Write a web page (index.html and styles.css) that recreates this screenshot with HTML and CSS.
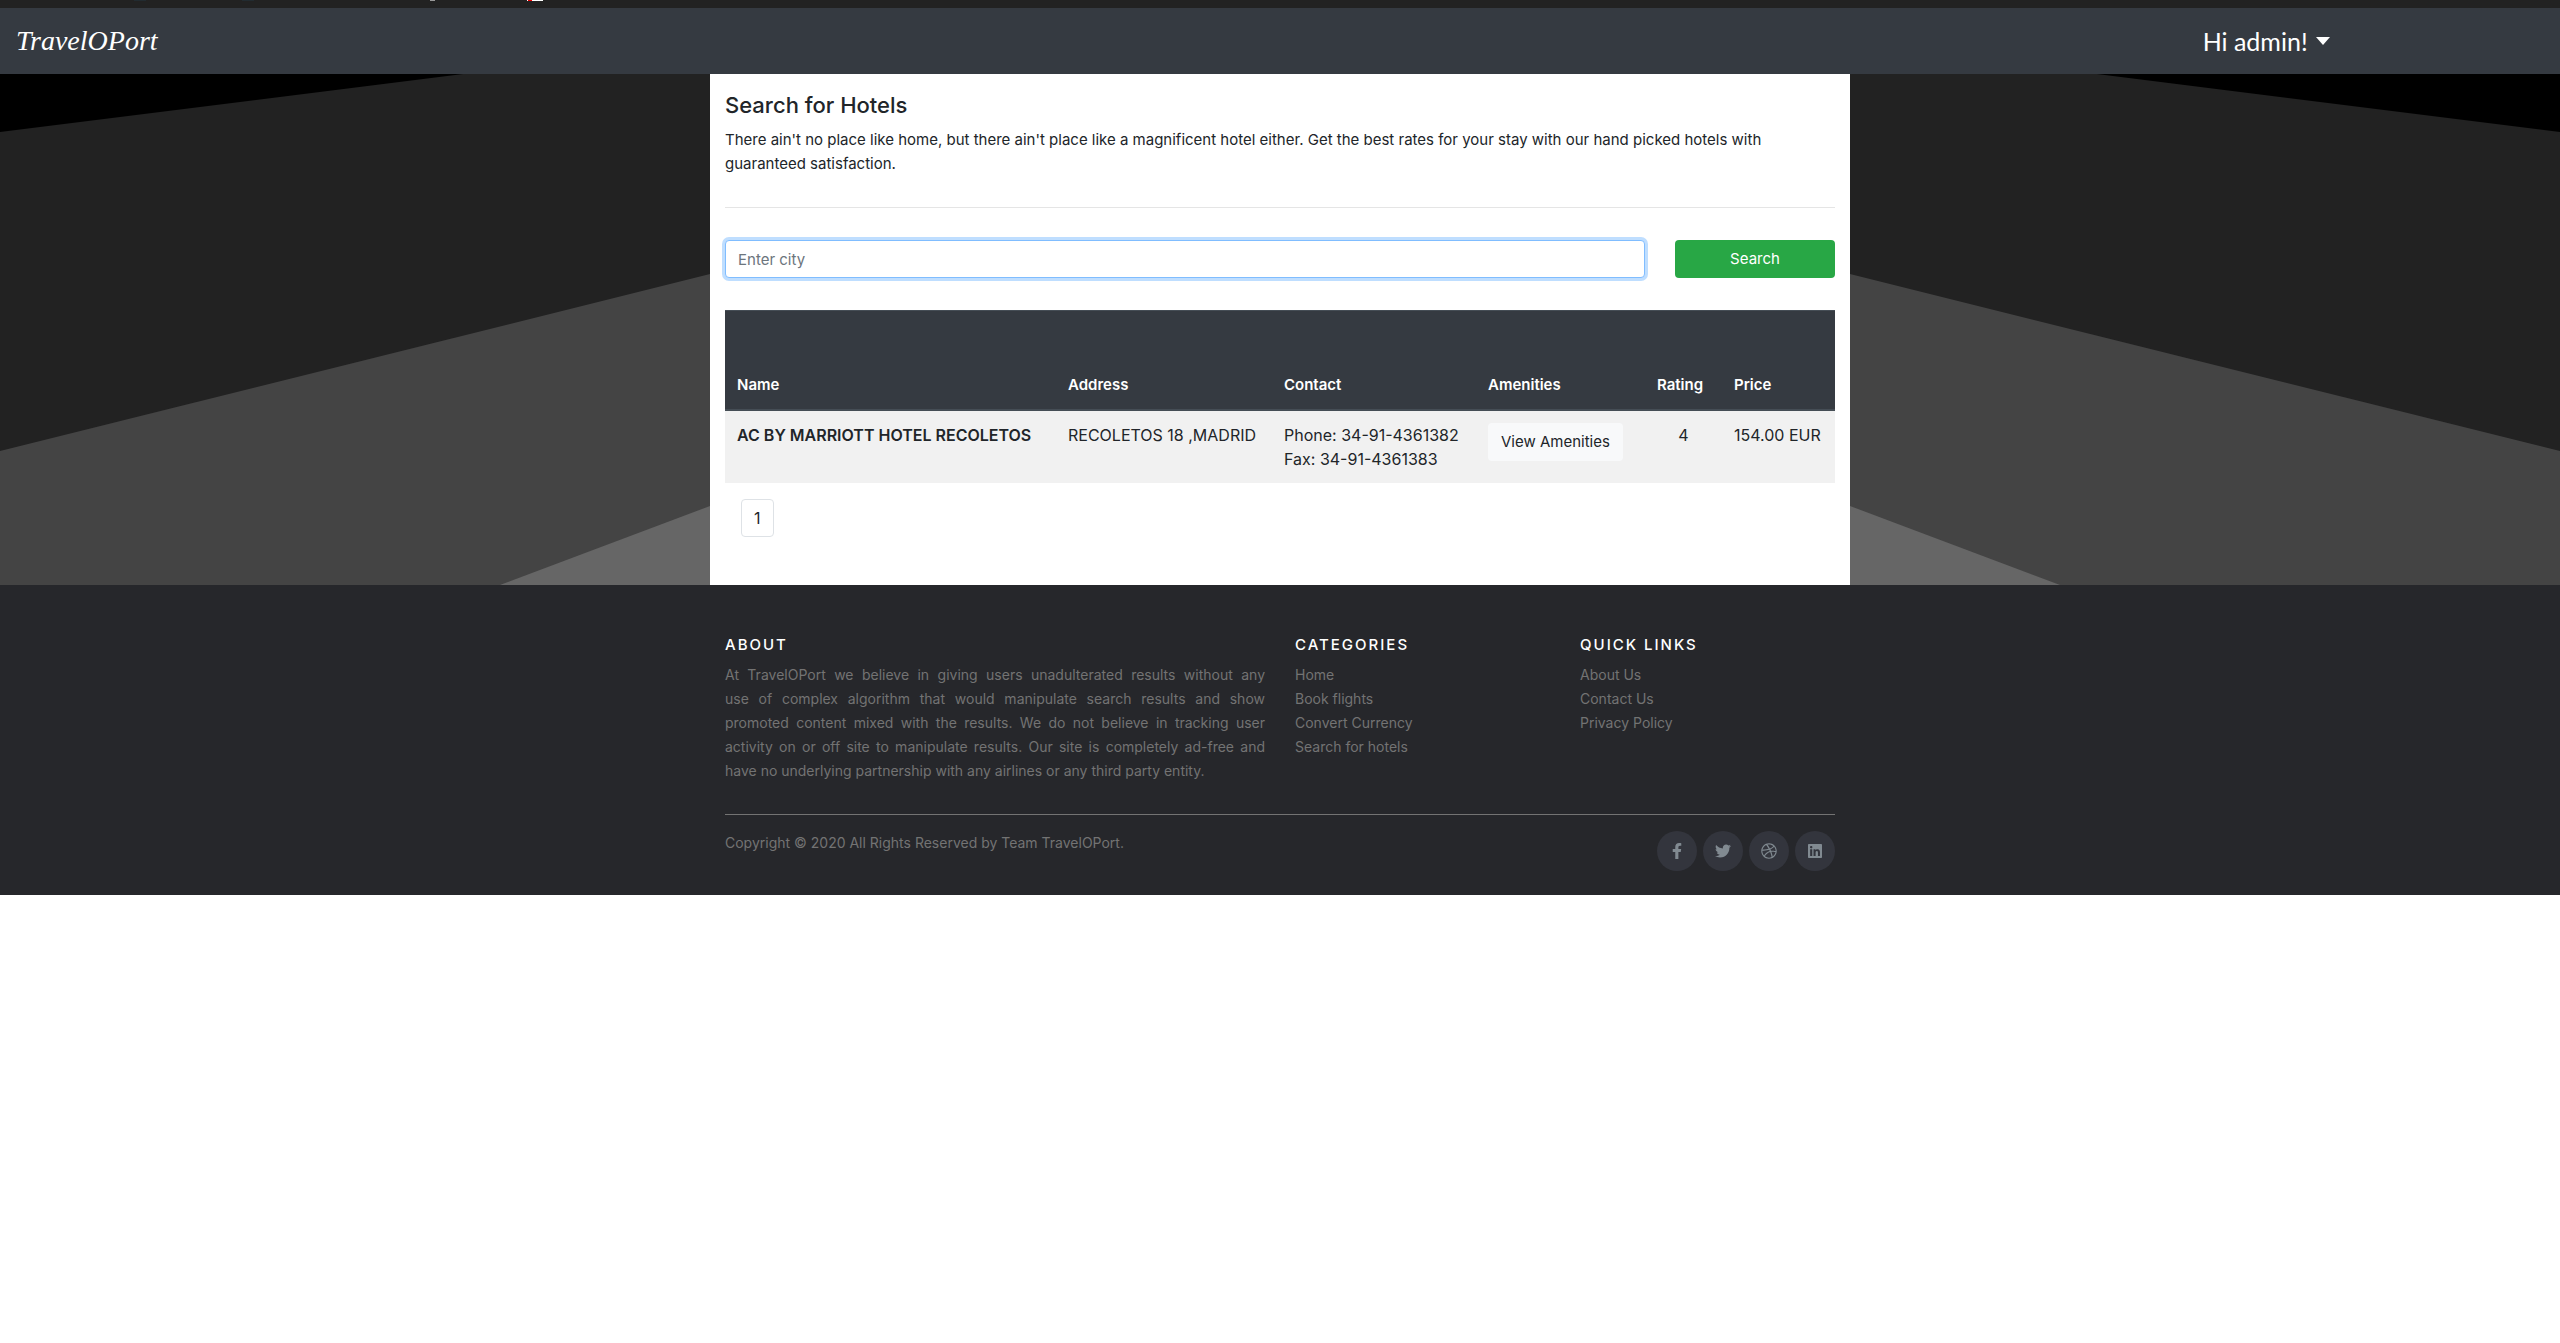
FILE: index.html
```html
<!DOCTYPE html>
<html lang="en">
  <head>
    <title>TravelOPort - Search for Hotels</title>
    <meta charset="utf-8">
    <meta name="viewport" content="width=device-width, initial-scale=1">
    <link rel="stylesheet" href="styles.css">
  </head>
  <body>

  <div class="topstrip">
    <svg width="560" height="1" viewBox="0 0 560 1" aria-hidden="true">
      <rect x="134" width="12" height="1" fill="#222b30"/>
      <rect x="242" width="12" height="1" fill="#222b30"/>
      <rect x="430" width="5" height="1" fill="#999"/>
      <rect x="527" width="16" height="1" fill="#fff"/>
      <rect x="528" width="4" height="1" fill="#e00"/>
    </svg>
  </div>

  <nav class="navbar">
    <a class="navbar-brand" href="#">TravelOPort</a>
    <button class="user-menu" type="button">Hi admin! <span class="caret"></span></button>
  </nav>

  <main class="backdrop">
    <div class="container content">
      <h4>Search for Hotels</h4>
      <p class="lead-text">There ain't no place like home, but there ain't place like a magnificent hotel either. Get the best rates for your stay with our hand picked hotels with guaranteed satisfaction.</p>
      <hr>

      <form class="search-form">
        <input class="form-control" type="text" name="city" placeholder="Enter city" aria-label="Enter city">
        <button class="btn btn-success" type="button">Search</button>
      </form>

      <table class="hotels">
        <colgroup>
          <col class="col-name">
          <col class="col-address">
          <col class="col-contact">
          <col class="col-amenities">
          <col class="col-rating">
          <col class="col-price">
        </colgroup>
        <thead>
          <tr>
            <th scope="col">Name</th>
            <th scope="col">Address</th>
            <th scope="col">Contact</th>
            <th scope="col">Amenities</th>
            <th scope="col">Rating</th>
            <th scope="col">Price</th>
          </tr>
        </thead>
        <tbody>
          <tr>
            <th scope="row">AC BY MARRIOTT HOTEL RECOLETOS</th>
            <td>RECOLETOS 18 ,MADRID</td>
            <td>Phone: 34-91-4361382<br>Fax: 34-91-4361383</td>
            <td><button class="btn btn-light" type="button">View Amenities</button></td>
            <td class="rating">4</td>
            <td>154.00 EUR</td>
          </tr>
        </tbody>
      </table>

      <div class="pagination">
        <a class="page-link" href="#">1</a>
      </div>
    </div>
  </main>

  <footer class="site-footer">
    <div class="container">
      <div class="footer-columns">
        <div>
          <h6>About</h6>
          <p class="about">
            <span>At TravelOPort we believe in giving users unadulterated results without any</span>
            <span>use of complex algorithm that would manipulate search results and show</span>
            <span>promoted content mixed with the results. We do not believe in tracking user</span>
            <span>activity on or off site to manipulate results. Our site is completely ad-free and</span>
            <span>have no underlying partnership with any airlines or any third party entity.</span>
          </p>
        </div>
        <div>
          <h6>Categories</h6>
          <ul class="footer-links">
            <li><a href="#">Home</a></li>
            <li><a href="#">Book flights</a></li>
            <li><a href="#">Convert Currency</a></li>
            <li><a href="#">Search for hotels</a></li>
          </ul>
        </div>
        <div>
          <h6>Quick Links</h6>
          <ul class="footer-links">
            <li><a href="#">About Us</a></li>
            <li><a href="#">Contact Us</a></li>
            <li><a href="#">Privacy Policy</a></li>
          </ul>
        </div>
      </div>

      <div class="footer-bottom">
        <p class="copyright">Copyright &copy; 2020 All Rights Reserved by Team TravelOPort.</p>
        <div class="social-icons">
          <a href="#" aria-label="Facebook"><svg viewBox="0 0 320 512"><path d="M279.14 288l14.22-92.66h-88.91v-60.13c0-25.35 12.42-50.06 52.24-50.06h40.42V6.26S260.43 0 225.36 0c-73.22 0-121.08 44.38-121.08 124.72v70.62H22.89V288h81.39v224h100.17V288z"/></svg></a>
          <a href="#" aria-label="Twitter"><svg viewBox="0 0 512 512"><path d="M459.37 151.716c.325 4.548.325 9.097.325 13.645 0 138.72-105.583 298.558-298.558 298.558-59.452 0-114.68-17.219-161.137-47.106 8.447.974 16.568 1.299 25.34 1.299 49.055 0 94.213-16.568 130.274-44.832-46.132-.975-84.792-31.188-98.112-72.772 6.498.974 12.995 1.624 19.818 1.624 9.421 0 18.843-1.3 27.614-3.573-48.081-9.747-84.143-51.98-84.143-102.985v-1.299c13.969 7.797 30.214 12.67 47.431 13.319-28.264-18.843-46.781-51.005-46.781-87.391 0-19.492 5.197-37.36 14.294-52.954 51.655 63.675 129.3 105.258 216.365 109.807-1.624-7.797-2.599-15.918-2.599-24.04 0-57.828 46.782-104.934 104.934-104.934 30.213 0 57.502 12.67 76.67 33.137 23.715-4.548 46.456-13.32 66.599-25.34-7.798 24.366-24.366 44.833-46.132 57.827 21.117-2.273 41.584-8.122 60.426-16.243-14.292 20.791-32.161 39.308-52.628 54.253z"/></svg></a>
          <a href="#" aria-label="Dribbble"><svg viewBox="0 0 512 512"><path d="M256 8C119.252 8 8 119.252 8 256s111.252 248 248 248 248-111.252 248-248S392.748 8 256 8zm163.97 114.366c29.503 36.046 47.369 81.957 47.835 131.955-6.984-1.477-77.018-15.682-147.502-6.818-5.752-14.041-11.181-26.393-18.617-41.614 78.321-31.977 113.818-77.482 118.284-83.523zM396.421 97.87c-3.81 5.427-35.697 48.286-111.021 76.519-34.712-63.776-73.185-116.168-79.04-124.008 67.176-16.193 137.966 1.27 190.061 47.489zm-230.48-33.25c5.585 7.659 43.438 60.116 78.537 122.509-99.087 26.313-186.36 25.934-195.834 25.809C62.38 147.205 106.678 92.573 165.941 64.62zM44.17 256.323c0-2.166.043-4.322.108-6.473 9.268.19 111.92 1.513 217.706-30.146 6.064 11.868 11.857 23.915 17.174 35.949-76.599 21.575-146.194 83.527-180.531 142.306C64.794 360.405 44.17 310.73 44.17 256.323zm81.807 167.113c22.127-45.233 82.178-103.622 167.579-132.756 29.74 77.283 42.039 142.053 45.189 160.638-68.112 29.013-150.015 21.053-212.768-27.882zm248.38 8.489c-2.171-12.886-13.446-74.897-41.152-151.033 66.38-10.626 124.7 6.768 131.947 9.055-9.442 58.941-43.273 109.844-90.795 141.978z"/></svg></a>
          <a href="#" aria-label="LinkedIn"><svg viewBox="0 0 448 512"><path d="M416 32H31.9C14.3 32 0 46.5 0 64.3v383.4C0 465.5 14.3 480 31.9 480H416c17.6 0 32-14.5 32-32.3V64.3c0-17.8-14.4-32.3-32-32.3zM135.4 416H69V202.2h66.5V416zm-33.2-243c-21.3 0-38.5-17.3-38.5-38.5S80.9 96 102.2 96c21.2 0 38.5 17.3 38.5 38.5 0 21.3-17.2 38.5-38.5 38.5zm282.1 243h-66.4V312c0-24.8-.5-56.7-34.5-56.7-34.6 0-39.9 27-39.9 54.9V416h-66.4V202.2h63.7v29.2h.9c8.9-16.8 30.6-34.5 62.2-34.5 66.5 0 78.9 43.8 78.9 100.9V416z"/></svg></a>
        </div>
      </div>
    </div>
  </footer>

  </body>
</html>
```
FILE: styles.css
```css
* {
  box-sizing: border-box;
}

body {
  margin: 0;
  background: #fff;
  color: #212529;
  font-family: Inter, "Liberation Sans", sans-serif;
  font-size: 15px;
  line-height: 24px;
}

a {
  text-decoration: none;
}

.container {
  max-width: 1140px;
  margin: 0 auto;
  padding: 0 15px;
}

/* navbar */

.topstrip {
  height: 8px;
  background: #222;
}

.topstrip svg {
  display: block;
}

.navbar {
  display: flex;
  align-items: center;
  justify-content: space-between;
  min-height: 66px;
  padding: 0 9% 0 16px;
  background: #353a41;
}

.navbar-brand {
  color: #fff;
  font: italic 28px/36px "Brush Script MT", "Liberation Serif", cursive;
}

.user-menu {
  display: flex;
  align-items: center;
  gap: 8px;
  padding: 0;
  border: 0;
  background: none;
  color: #fff;
  font: 25px/36px "Comic Sans MS", Lato, cursive;
  cursor: pointer;
}

.caret {
  border-top: 8px solid #fff;
  border-left: 7px solid transparent;
  border-right: 7px solid transparent;
}

/* page content */

.backdrop {
  background: #222 url("data:image/svg+xml,%3Csvg xmlns='http://www.w3.org/2000/svg' viewBox='0 0 2560 511' preserveAspectRatio='none'%3E%3Cpath fill='%23000' d='M0 0H2560V511H0z'/%3E%3Cpath fill='%23222' d='M0 58L463 0H2097L2560 58V511H0z'/%3E%3Cpath fill='%23444' d='M0 377L1280 58L2560 377V511H0z'/%3E%3Cpath fill='%23666' d='M500 511L710 432L1280 218L1850 432L2060 511z'/%3E%3C/svg%3E") center / 100% 100% no-repeat;
}

.content {
  padding-top: 16px;
  padding-bottom: 48px;
  background: #fff;
}

h4 {
  margin: 0 0 8px;
  font-size: 22px;
  font-weight: 500;
  line-height: 30px;
}

.lead-text {
  margin: 0;
}

hr {
  margin: 31px 0 32px;
  border: 0;
  border-top: 1px solid #e5e5e5;
}

.search-form {
  display: grid;
  grid-template-columns: 1fr 160px;
  gap: 30px;
  margin-bottom: 32px;
}

.form-control {
  height: 38px;
  padding: 6px 12px;
  border: 1px solid #80bdff;
  border-radius: 4px;
  outline: 0;
  box-shadow: 0 0 0 3px #bfdeff;
  font: inherit;
}

.form-control::placeholder {
  color: #6c757d;
}

.btn {
  height: 38px;
  padding: 6px 12px;
  border: 1px solid transparent;
  border-radius: 4px;
  font: inherit;
  font-size: 15px;
  cursor: pointer;
}

.btn-success {
  background: #28a745;
  color: #fff;
}

.btn-light {
  background: #f8f9fa;
  color: #212529;
}

.hotels {
  width: 100%;
  margin-bottom: 16px;
  border-spacing: 0;
  table-layout: fixed;
  font-size: 16px;
}

.col-name { width: 331px; }
.col-address { width: 216px; }
.col-contact { width: 204px; }
.col-amenities { width: 169px; }
.col-rating { width: 77px; }
.col-price { width: 113px; }

.hotels th,
.hotels td {
  padding: 12px;
  text-align: left;
  vertical-align: top;
  white-space: nowrap;
}

.hotels th {
  font-weight: 600;
}

.hotels thead th {
  height: 101px;
  border-top: 1px solid #454d55;
  border-bottom: 2px solid #454d55;
  background: #353a41;
  color: #fff;
  font-size: 15px;
  vertical-align: bottom;
}

.hotels tbody tr {
  background: #f1f1f1;
}

.hotels .rating {
  text-align: center;
}

.pagination {
  display: flex;
  padding-left: 16px;
  font-size: 16px;
}

.page-link {
  padding: 6px 12px;
  border: 1px solid #dee2e6;
  border-radius: 4px;
  color: #212529;
}

/* footer */

.site-footer {
  padding: 50px 0 24px;
  background: #26272b;
  color: #737373;
}

.footer-columns {
  display: grid;
  grid-template-columns: 540px 1fr 1fr;
  gap: 30px;
  padding-bottom: 31px;
  border-bottom: 1px solid #737373;
}

.site-footer h6 {
  margin: 0 0 8px;
  color: #fff;
  font-size: 15px;
  font-weight: 500;
  line-height: 20px;
  letter-spacing: 2px;
  text-transform: uppercase;
}

.about {
  margin: 0;
  font-size: 14px;
}

.about span {
  display: block;
  text-align-last: justify;
}

.about span:last-child {
  text-align-last: left;
}

.footer-links {
  margin: 0;
  padding: 0;
  list-style: none;
  font-size: 14px;
}

.footer-links a {
  color: #737373;
}

.footer-bottom {
  display: flex;
  justify-content: space-between;
  padding-top: 16px;
}

.copyright {
  margin: 0;
  font-size: 14px;
}

.social-icons {
  display: flex;
  gap: 6px;
}

.social-icons a {
  display: flex;
  align-items: center;
  justify-content: center;
  width: 40px;
  height: 40px;
  border-radius: 50%;
  background: #33353d;
}

.social-icons svg {
  height: 16px;
  fill: #818a91;
}
```
